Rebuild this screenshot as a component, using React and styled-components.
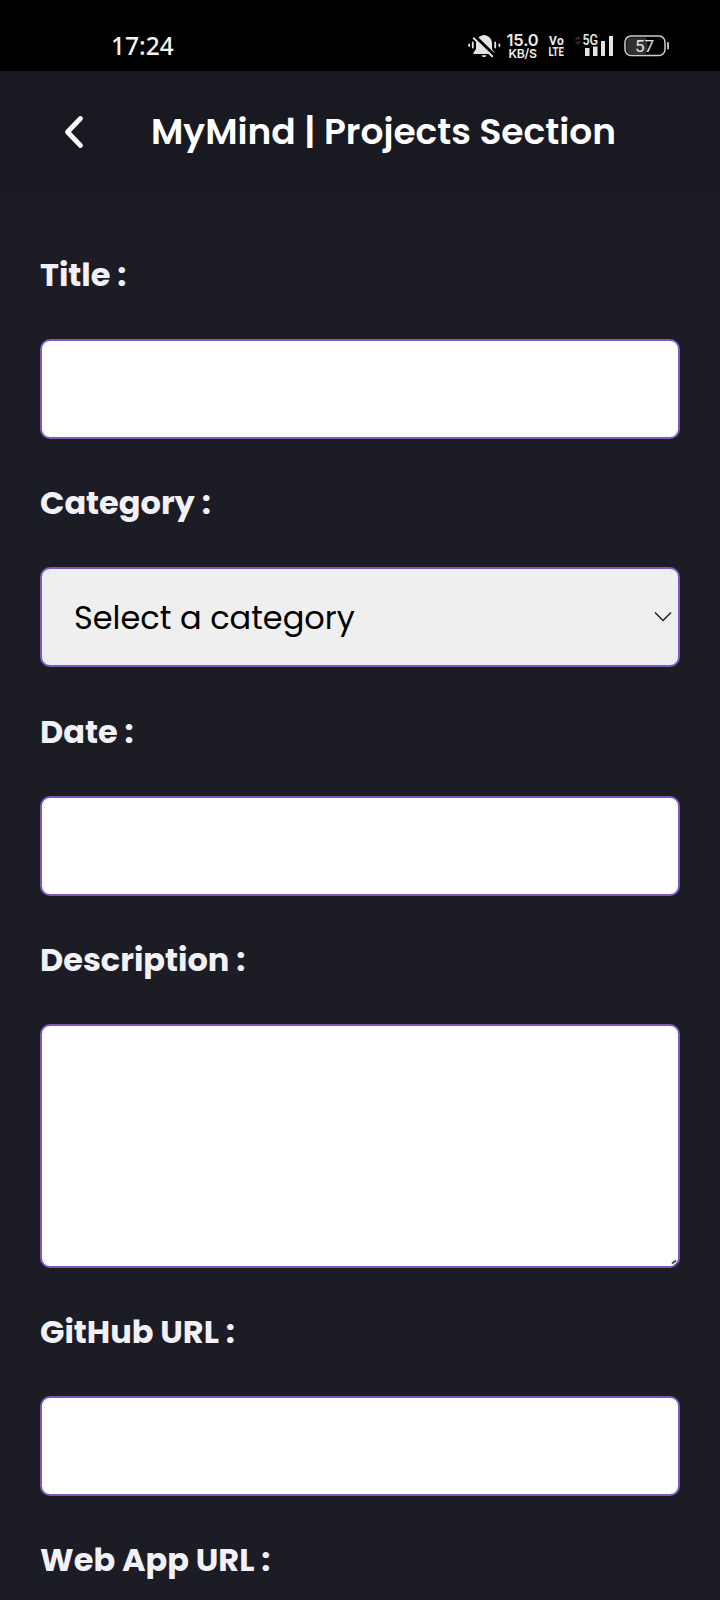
import React from "react";
import styled, { createGlobalStyle } from "styled-components";

const GlobalStyle = createGlobalStyle`
  *, *::before, *::after { box-sizing: border-box; }
  html, body { margin: 0; padding: 0; }
  body {
    background: #1c1c25;
    font-family: Poppins, Inter, "Open Sans", sans-serif;
    overflow: hidden;
  }
`;

const Screen = styled.div`
  width: 720px;
  height: 1600px;
  overflow: hidden;
  background: #1c1c25;
`;

const StatusBar = styled.div`
  display: flex;
  justify-content: space-between;
  height: 71px;
  padding: 20px 50px 0 111px;
  background: #000;
  color: #ececec;
`;

const Clock = styled.div`
  font: 500 24.5px/50px "Noto Sans", sans-serif;
  padding-top: 1px;
  color: #f4f4f4;
`;

const StatusIcons = styled.div`
  display: flex;
  align-items: flex-start;
  height: 50px;
`;

const StatusGlyph = styled.svg`
  display: block;
  flex: none;
  margin-right: ${(p) => p.$after || 0}px;
  overflow: visible;
`;

const Stack = styled.div`
  display: flex;
  flex-direction: column;
  align-items: center;
  width: ${(p) => p.$width}px;
  padding-top: ${(p) => p.$top}px;
  margin-right: ${(p) => p.$after}px;
`;

const StackText = styled.span`
  font-family: ${(p) => p.$family || "Inter"}, sans-serif;
  font-weight: ${(p) => p.$weight || 600};
  font-size: ${(p) => p.$size}px;
  line-height: ${(p) => p.$line}px;
  letter-spacing: ${(p) => p.$tracking || 0}px;
  white-space: nowrap;
  transform: scaleX(${(p) => p.$squeeze || 1});
`;

const Header = styled.header`
  display: flex;
  align-items: center;
  height: 121px;
  padding-left: 61px;
  background: #191922;
`;

const BackButton = styled.button`
  display: flex;
  width: 90px;
  padding: 0;
  border: 0;
  background: none;
`;

const PageTitle = styled.h1`
  margin: 0;
  color: #fff;
  font-size: 36px;
  font-weight: 600;
  line-height: 54px;
  white-space: nowrap;
`;

const Form = styled.form`
  display: flex;
  flex-direction: column;
  padding: 18.6px 40px 0;
`;

const Label = styled.label`
  height: 128.4px;
  padding-top: 40.2px;
  color: #f1f1f7;
  font-size: 32px;
  font-weight: 700;
  line-height: 48px;
  white-space: nowrap;
`;

const Input = styled.input`
  display: block;
  width: 100%;
  height: 100px;
  margin: 0;
  padding: 0 32px;
  border: 2px solid #7e57c2;
  border-radius: 10px;
  background: #fff;
  font: 400 32px Poppins, sans-serif;
  outline: none;
`;

const SelectWrap = styled.div`
  display: grid;
  align-items: center;
  & > * { grid-area: 1 / 1; }
`;

const Select = styled.select`
  appearance: none;
  width: 100%;
  height: 100px;
  margin: 0;
  padding: 0 32px;
  border: 2px solid #7e57c2;
  border-radius: 10px;
  background: #efefef;
  color: #000;
  font-family: Poppins, Inter, sans-serif;
  font-size: 32px;
  font-weight: 400;
  outline: none;
`;

const Chevron = styled.svg`
  justify-self: end;
  margin-right: 8px;
  pointer-events: none;
`;

const AreaWrap = styled.div`
  position: relative;
  height: 243.6px;
`;

const TextArea = styled.textarea`
  display: block;
  width: 100%;
  height: 100%;
  margin: 0;
  border: 2px solid #7e57c2;
  border-radius: 10px;
  background: #fff;
  resize: none;
  outline: none;
`;

const Grip = styled.svg`
  position: absolute;
  right: 1px;
  bottom: 1px;
`;

function BellOff() {
  return (
    <StatusGlyph $after={6} width="34" height="50" viewBox="0 0 34 50">
      <path d="M17 15c-5 .6-8 4-8 8.500v5.500l-2.500 3.500v1.500h21v-1.500l-2.500-3.500v-5.500c0-4.500-3-7.900-8-8.500z" fill="#e4e4e4" />
      <path d="M14.500 35.200h5c-.5 1.300-1.300 1.800-2.500 1.800s-2-.5-2.500-1.800z" fill="#e4e4e4" />
      <path d="M9 17.500l18.500 18" stroke="#000" strokeWidth="3.400" />
      <path d="M7.500 17.500l18.500 18" stroke="#e4e4e4" strokeWidth="1.900" strokeLinecap="round" transform="translate(-.8 .8)" />
      <path d="M2.200 24.500v1.500M5.800 22.500v5M28.200 22.500v5M32.400 24.500v1.500" stroke="#e4e4e4" strokeWidth="1.800" strokeLinecap="round" />
    </StatusGlyph>
  );
}

function Signal() {
  return (
    <StatusGlyph $after={9} width="41" height="50" viewBox="0 0 41 50">
      <path d="M1.500 19.500l3.500-3.500 3.500 3.500zM1.500 21.500l3.500 3.500 3.500-3.500z" fill="#2c2c2c" />
      <path d="M12 28h4.500v8H12zM20 26.500h4.500V36H20zM28 21h4v15h-4zM36 16h4v20h-4z" fill="#e4e4e4" />
      <text x="9.500" y="25" fill="#e4e4e4" fontFamily="Roboto, sans-serif" fontWeight="600" fontSize="14" textLength="15.500" lengthAdjust="spacingAndGlyphs">5G</text>
    </StatusGlyph>
  );
}

function Battery() {
  return (
    <StatusGlyph width="47" height="50" viewBox="0 0 47 50">
      <rect x="3.500" y="17.500" width="21" height="16.500" rx="4" fill="#303030" />
      <rect x="2" y="16" width="40" height="19.500" rx="6" fill="none" stroke="#cfcfcf" strokeWidth="1.500" />
      <path d="M45 23v5.500" stroke="#cfcfcf" strokeWidth="1.800" strokeLinecap="round" />
      <text x="21.500" y="32" textAnchor="middle" fill="#e4e4e4" fontFamily="Roboto, sans-serif" fontSize="17">57</text>
    </StatusGlyph>
  );
}

export default function App() {
  return (
    <Screen>
      <GlobalStyle />
      <StatusBar>
        <Clock>17:24</Clock>
        <StatusIcons>
          <BellOff />
          <Stack $width={31} $top={12} $after={11}>
            <StackText $size={16.5} $line={17} $tracking={-0.2}>15.0</StackText>
            <StackText $size={12.3} $line={10} $tracking={-0.3}>KB/S</StackText>
          </Stack>
          <Stack $width={15} $top={15} $after={9}>
            <StackText $family="Roboto" $weight={700} $size={12} $line={12} $tracking={0.4}>Vo</StackText>
            <StackText $family="Roboto" $weight={700} $size={12.5} $line={10} $squeeze={0.76}>LTE</StackText>
          </Stack>
          <Signal />
          <Battery />
        </StatusIcons>
      </StatusBar>
      <Header>
        <BackButton type="button" aria-label="Back">
          <svg width="24" height="36" viewBox="0 0 24 36" fill="none" stroke="#fff" strokeWidth="4.800" strokeLinecap="round" strokeLinejoin="round">
            <path d="M19.500 4.500L6.500 18L19.500 31.500" />
          </svg>
        </BackButton>
        <PageTitle>MyMind | Projects Section</PageTitle>
      </Header>
      <Form>
        <Label>Title :</Label>
        <Input />
        <Label>Category :</Label>
        <SelectWrap>
          <Select defaultValue="none">
            <option value="none">Select a category</option>
          </Select>
          <Chevron width="18" height="12" viewBox="0 0 18 12" fill="none" stroke="#222" strokeWidth="1.500">
            <path d="M1 1.500L9 9.500L17 1.500" />
          </Chevron>
        </SelectWrap>
        <Label>Date :</Label>
        <Input />
        <Label>Description :</Label>
        <AreaWrap>
          <TextArea />
          <Grip width="8" height="8" viewBox="0 0 8 8" stroke="#444" strokeWidth="2">
            <path d="M1 4.500L5 1.500M4 7L7 4" />
          </Grip>
        </AreaWrap>
        <Label>GitHub URL :</Label>
        <Input />
        <Label>Web App URL :</Label>
      </Form>
    </Screen>
  );
}
